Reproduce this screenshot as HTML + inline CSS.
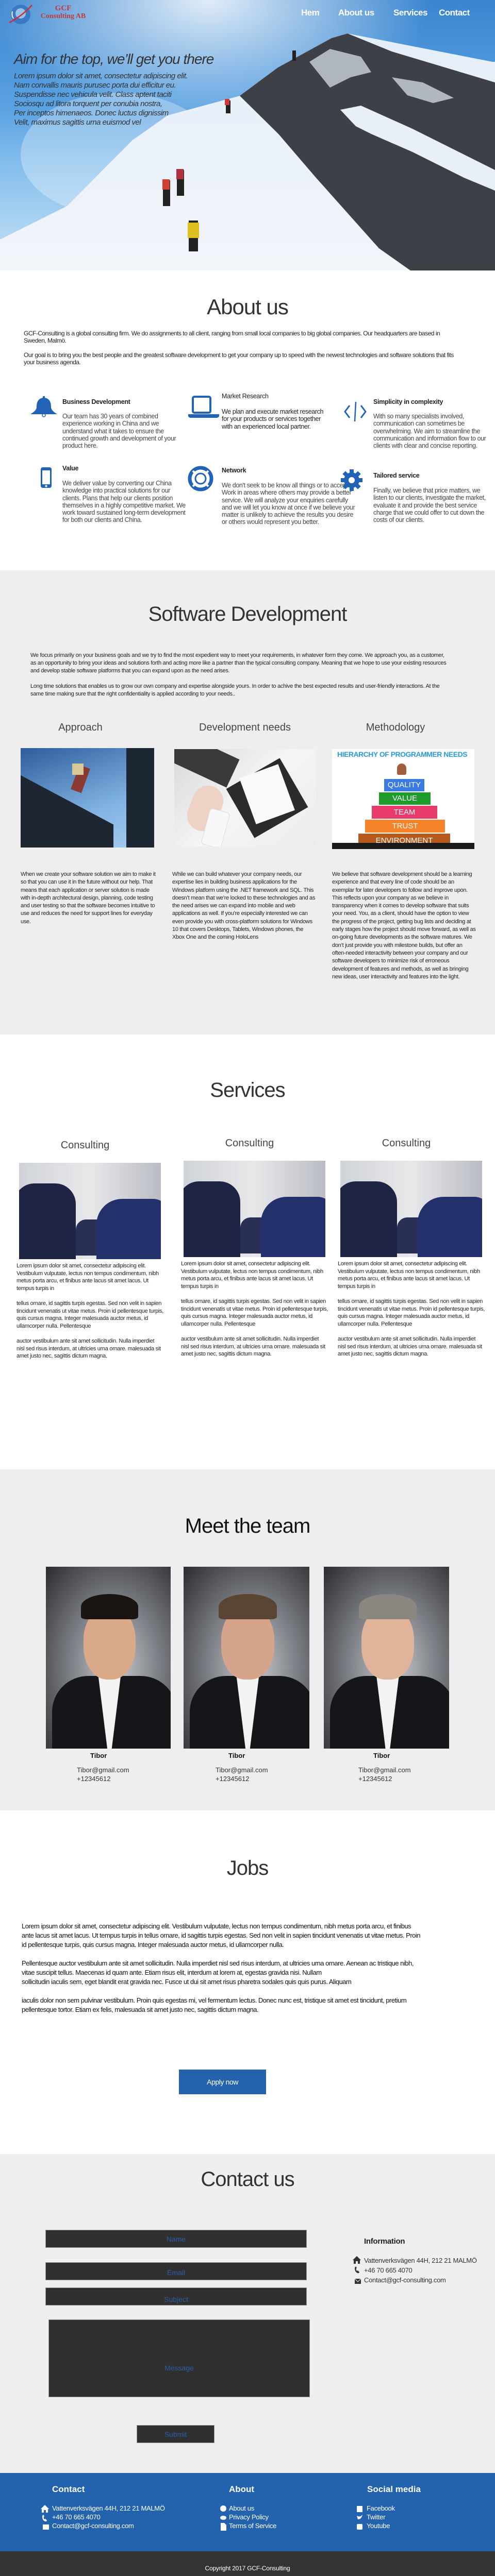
<!DOCTYPE html>
<html><head><meta charset="utf-8">
<style>
*{margin:0;padding:0;box-sizing:border-box}
html,body{width:960px;height:5009px;overflow:hidden}
body{position:relative;font-family:"Liberation Sans",sans-serif;color:#222;background:#fff}
.a{position:absolute}
.h{position:absolute;left:0;width:960px;text-align:center;font-size:40px;color:#333;font-weight:normal;letter-spacing:-1px}
.p{position:absolute;font-size:11px;line-height:14.4px;color:#222;letter-spacing:-0.3px}
.ic{position:absolute}
.t1{font-size:12.5px;font-weight:bold;color:#222;letter-spacing:-0.3px}
.t2{font-size:12.5px;line-height:14.3px;color:#444;letter-spacing:-0.4px}
.sub{position:absolute;font-size:20px;color:#444;text-align:center;width:300px}
.inp{position:absolute;background:#303030;border:1px solid #999;color:#2a5ca6;font-size:14px;text-align:center}
.ft{position:absolute;color:#fff;font-size:13px;line-height:17px}
</style></head><body>

<!-- HERO -->
<div class="a" style="left:0;top:0;width:960px;height:525px;overflow:hidden;background:linear-gradient(180deg,#3a85cf 0%,#5aa2e2 40%,#8cc3ee 65%,#c8e2f6 100%)">
<svg class="a" style="left:0;top:0" width="960" height="525">
<defs><radialGradient id="sun" cx="0.42" cy="0.0" r="0.45"><stop offset="0" stop-color="#fff" stop-opacity="0.85"/><stop offset="1" stop-color="#fff" stop-opacity="0"/></radialGradient>
<linearGradient id="snow" x1="0" y1="0" x2="0" y2="1"><stop offset="0" stop-color="#e4eef8"/><stop offset="1" stop-color="#f2f5fa"/></linearGradient></defs>
<rect width="960" height="525" fill="url(#sun)"/>
<ellipse cx="230" cy="300" rx="190" ry="120" fill="#fff" opacity="0.3"/>
<polygon points="0,525 0,465 130,400 257,272 325,224 465,186 539,131 643,74 674,65 955,120 960,120 960,525" fill="url(#snow)"/>
<polygon points="465,186 539,131 643,74 674,65 760,100 960,160 960,525 796,525 735,482 612,344 540,260" fill="#3d4047"/>
<polygon points="660,213 700,205 800,250 900,300 960,330 960,370 900,345 800,295 720,260 690,245" fill="#e9eff6"/>
<polygon points="600,120 640,95 700,110 720,140 680,150 640,170" fill="#dfe8f1" opacity="0.7"/>
<polygon points="760,150 820,160 880,190 840,200 790,185" fill="#e2e9f1" opacity="0.7"/>
<g fill="#222"><rect x="366" y="428" width="18" height="60"/><rect x="316" y="350" width="14" height="50"/><rect x="343" y="330" width="14" height="50"/><rect x="438" y="195" width="9" height="25"/><rect x="567" y="98" width="7" height="20"/></g>
<rect x="364" y="432" width="22" height="30" fill="#e0c020"/>
<rect x="315" y="348" width="14" height="20" fill="#d04030"/>
<rect x="342" y="328" width="14" height="20" fill="#b03040"/>
<rect x="436" y="192" width="9" height="12" fill="#d03a3a"/>
</svg>
<svg class="a" style="left:14px;top:6px" width="50" height="46"><circle cx="26" cy="22" r="19" fill="#3a78c8"/><circle cx="26" cy="20" r="10" fill="#bfe2f7" opacity="0.7"/><path d="M4 38 Q30 24 48 4" stroke="#d03030" stroke-width="2.5" fill="none"/><path d="M10 16 Q8 24 12 30" stroke="#fff" stroke-width="2" fill="none"/></svg>
<div class="a" style="left:75px;top:9px;width:95px;text-align:center;font-family:'Liberation Serif',serif;color:#c23a3a;font-weight:bold;font-size:15px;line-height:15px">GCF<br><span style="font-size:14px">Consulting AB</span></div>
<div class="a" style="top:15px;left:584px;color:#fff;font-size:17px;font-weight:bold;letter-spacing:-0.5px">Hem</div>
<div class="a" style="top:15px;left:656px;color:#fff;font-size:17px;font-weight:bold;letter-spacing:-0.5px">About us</div>
<div class="a" style="top:15px;left:763px;color:#fff;font-size:17px;font-weight:bold;letter-spacing:-0.5px">Services</div>
<div class="a" style="top:15px;left:851px;color:#fff;font-size:17px;font-weight:bold;letter-spacing:-0.5px">Contact</div>
<div class="a" style="top:99px;left:27px;font-size:28px;font-style:italic;color:#333;letter-spacing:-1px">Aim for the top, we’ll get you there</div>
<div class="a" style="top:139px;left:27px;font-size:15px;line-height:18px;font-style:italic;color:#333;letter-spacing:-0.5px">Lorem ipsum dolor sit amet, consectetur adipiscing elit.<br>Nam convallis mauris purusec porta dui efficitur eu.<br>Suspendisse nec vehicula velit. Class aptent taciti<br>Sociosqu ad litora torquent per conubia nostra,<br>Per inceptos himenaeos. Donec luctus dignissim<br>Velit, maximus sagittis urna euismod vel</div>
</div>

<!-- ABOUT -->
<div class="h" style="top:572px;font-size:42px">About us</div>
<div class="p" style="left:46px;top:640px;width:850px;font-size:12px;line-height:14px;letter-spacing:-0.5px">GCF-Consulting is a global consulting firm. We do assignments to all client, ranging from small local companies to big global companies. Our headquarters are based in Sweden, Malmö.<br><br>Our goal is to bring you the best people and the greatest software development to get your company up to speed with the newest technologies and software solutions that fits your business agenda.</div>

<svg class="ic" style="left:55px;top:768px" width="60" height="42"><path d="M28 1 h4 v3 C42 6 44 14 44 22 C44 28 50 32 56 36 H4 C10 32 16 28 16 22 C16 14 18 6 28 4Z" fill="#2263b5"/><circle cx="30" cy="38" r="3" fill="none" stroke="#2263b5" stroke-width="1.5"/></svg>
<div class="a t1" style="left:121px;top:773px">Business Development</div>
<div class="a t2" style="left:121px;top:801px;width:230px">Our team has 30 years of combined experience working in China and we understand what it takes to ensure the continued growth and development of your product here.</div>

<svg class="ic" style="left:365px;top:767px" width="60" height="44"><rect x="9" y="3" width="34" height="31" rx="3" fill="none" stroke="#2263b5" stroke-width="4"/><path d="M0 37 H60 V41 Q58 44 55 44 H5 Q2 44 0 41Z" fill="#2263b5"/></svg>
<div class="a t1" style="left:430px;top:762px;font-weight:normal">Market Research</div>
<div class="a t2" style="left:430px;top:792px;width:210px;color:#222">We plan and execute market research for your products or services together with an experienced local partner.</div>

<svg class="ic" style="left:666px;top:779px" width="48" height="40"><path d="M12 8 L3 20 L12 32 M34 8 L43 20 L34 32" fill="none" stroke="#2263b5" stroke-width="3"/><path d="M24 1 L22 39" stroke="#2263b5" stroke-width="2.5"/></svg>
<div class="a t1" style="left:724px;top:773px">Simplicity in complexity</div>
<div class="a t2" style="left:724px;top:801px;width:230px">With so many specialists involved, communication can sometimes be overwhelming. We aim to streamline the communication and information flow to our clients with clear and concise reporting.</div>

<svg class="ic" style="left:78px;top:906px" width="24" height="42"><rect x="1" y="1" width="21" height="40" rx="4" fill="#2263b5"/><rect x="4" y="7" width="15" height="27" fill="#fff"/><circle cx="11.5" cy="37.5" r="2" fill="#fff"/></svg>
<div class="a t1" style="left:121px;top:902px">Value</div>
<div class="a t2" style="left:121px;top:931px;width:245px">We deliver value by converting our China knowledge into practical solutions for our clients. Plans that help our clients position themselves in a highly competitive market. We work toward sustained long-term development for both our clients and China.</div>

<svg class="ic" style="left:364px;top:904px" width="50" height="50"><circle cx="25" cy="25" r="21" fill="none" stroke="#2263b5" stroke-width="7"/><circle cx="25" cy="25" r="10" fill="none" stroke="#2263b5" stroke-width="3"/><g stroke="#fff" stroke-width="4"><path d="M10 10 L16 16 M40 10 L34 16 M10 40 L16 34 M40 40 L34 34"/></g></svg>
<div class="a t1" style="left:430px;top:906px">Network</div>
<div class="a t2" style="left:430px;top:935px;width:260px">We don't seek to be know all things or to accept Work in areas where others may provide a better service. We will analyze your enquiries carefully and we will let you know at once if we believe your matter is unlikely to achieve the results you desire or others would represent you better.</div>

<svg class="ic" style="left:659px;top:910px" width="46" height="44"><g fill="#2263b5"><circle cx="23" cy="22" r="15"/><rect x="19" y="1" width="8" height="42"/><rect x="2" y="18" width="42" height="8"/><rect x="19" y="1" width="8" height="42" transform="rotate(45 23 22)"/><rect x="19" y="1" width="8" height="42" transform="rotate(-45 23 22)"/></g><circle cx="23" cy="22" r="6" fill="#fff"/></svg>
<div class="a t1" style="left:724px;top:916px">Tailored service</div>
<div class="a t2" style="left:724px;top:945px;width:230px">Finally, we believe that price matters, we listen to our clients, investigate the market, evaluate it and provide the best service charge that we could offer to cut down the costs of our clients.</div>

<!-- SOFTWARE DEV -->
<div class="a" style="left:0;top:1107px;width:960px;height:901px;background:#eeeeee"></div>
<div class="h" style="top:1170px">Software Development</div>
<div class="p" style="left:59px;top:1265px;width:815px;line-height:15px">We focus primarily on your business goals and we try to find the most expedient way to meet your requirements, in whatever form they come. We approach you, as a customer, as an opportunity to bring your ideas and solutions forth and acting more like a partner than the typical consulting company. Meaning that we hope to use your existing resources and develop stable software platforms that you can expand upon as the need arises.<br><br>Long time solutions that enables us to grow our own company and expertise alongside yours. In order to achive the best expected results and user-friendly interactions. At the same time making sure that the right confidentiality is applied according to your needs..</div>
<div class="sub" style="left:6px;top:1401px">Approach</div>
<div class="sub" style="left:325px;top:1401px">Development needs</div>
<div class="sub" style="left:617px;top:1401px">Methodology</div>

<div class="a" style="left:40px;top:1452px;width:259px;height:193px;background:linear-gradient(160deg,#2e5d9a,#7fb2e3 60%,#a9cdef);overflow:hidden">
<div class="a" style="left:205px;top:0;width:54px;height:193px;background:#1d2733"></div>
<div class="a" style="left:-40px;top:90px;width:220px;height:200px;background:#1e2631;transform:skewY(28deg)"></div>
<div class="a" style="left:105px;top:35px;width:22px;height:50px;background:#8a3a30;transform:rotate(20deg)"></div>
<div class="a" style="left:100px;top:30px;width:22px;height:22px;background:#d8c79a"></div>
</div>
<div class="a" style="left:338px;top:1454px;width:275px;height:189px;background:linear-gradient(135deg,#d8d8d8,#f5f5f5 50%,#ececec);overflow:hidden">
<div class="a" style="left:-10px;top:-10px;width:130px;height:60px;background:#3a3a3a;transform:rotate(25deg)"></div>
<div class="a" style="left:120px;top:40px;width:120px;height:110px;background:#2b2b2b;transform:rotate(-30deg)"></div>
<div class="a" style="left:140px;top:40px;width:80px;height:95px;background:#fafafa;transform:rotate(-20deg)"></div>
<div class="a" style="left:30px;top:70px;width:60px;height:90px;background:#efd2c6;border-radius:30px;transform:rotate(20deg)"></div>
<div class="a" style="left:60px;top:118px;width:40px;height:72px;background:#f8f8f8;border:1px solid #ddd;border-radius:6px;transform:rotate(15deg)"></div>
</div>
<div class="a" style="left:644px;top:1454px;width:276px;height:194px;background:#fff;overflow:hidden">
<div class="a" style="left:10px;top:2px;font-size:14px;font-weight:bold;color:#2a9bd8;letter-spacing:-0.5px">HIERARCHY OF PROGRAMMER NEEDS</div>
<div class="a" style="left:126px;top:28px;width:18px;height:22px;background:#a06040;border-radius:9px 9px 3px 3px"></div>
<div class="a" style="left:101px;top:58px;width:78px;height:24px;background:#3b7ae0;color:#fff;font-size:15px;text-align:center;line-height:24px">QUALITY</div>
<div class="a" style="left:91px;top:84px;width:100px;height:24px;background:#1e9b2c;color:#fff;font-size:15px;text-align:center;line-height:24px">VALUE</div>
<div class="a" style="left:77px;top:110px;width:127px;height:25px;background:#e83b6b;color:#fff;font-size:15px;text-align:center;line-height:25px">TEAM</div>
<div class="a" style="left:64px;top:137px;width:155px;height:25px;background:#f6822a;color:#fff;font-size:15px;text-align:center;line-height:25px">TRUST</div>
<div class="a" style="left:51px;top:164px;width:178px;height:28px;background:#b55a1c;color:#fff;font-size:15px;text-align:center;line-height:28px">ENVIRONMENT</div>
<div class="a" style="left:0;top:182px;width:276px;height:14px;background:#1a1a1a"></div>
</div>
<div class="p" style="left:40px;top:1690px;width:262px;line-height:15.3px">When we create your software solution we aim to make it so that you can use it in the future without our help. That means that each application or server solution is made with in-depth architectural design, planning, code testing and user testing so that the software becomes intuitive to use and reduces the need for support lines for everyday use.</div>
<div class="p" style="left:334px;top:1690px;width:278px;line-height:15.3px">While we can build whatever your company needs, our expertise lies in building business applications for the Windows platform using the .NET framework and SQL. This doesn’t mean that we’re locked to these technologies and as the need arises we can expand into mobile and web applications as well. If you’re especially interested we can even provide you with cross-platform solutions for Windows 10 that covers Desktops, Tablets, Windows phones, the Xbox One and the coming HoloLens</div>
<div class="p" style="left:644px;top:1690px;width:280px;line-height:15.3px">We believe that software development should be a learning experience and that every line of code should be an exemplar for later developers to follow and improve upon. This reflects upon your company as we believe in transparency when it comes to develop software that suits your need. You, as a client, should have the option to view the progress of the project, getting bug lists and deciding at early stages how the project should move forward, as well as on-going future developments as the software matures. We don’t just provide you with milestone builds, but offer an often-needed interactivity between your company and our software developers to minimize risk of erroneous development of features and methods, as well as bringing new ideas, user interactivity and features into the light.</div>

<!-- SERVICES -->
<style>
.svc{width:275px;height:187px;overflow:hidden;background:linear-gradient(90deg,#cfd3d8,#e8e8ea 50%,#b9bcc4)}
.svc::before{content:"";position:absolute;left:-10px;top:40px;width:120px;height:170px;background:#1f2444;border-radius:40px 40px 0 0}
.svc::after{content:"";position:absolute;left:150px;top:70px;width:140px;height:130px;background:#23306b;border-radius:50px 30px 0 0;box-shadow:-70px 10px 0 -30px #2a2f55}
</style>
<div class="h" style="top:2094px">Services</div>
<div class="sub" style="left:15px;top:2212px">Consulting</div>
<div class="sub" style="left:334px;top:2208px">Consulting</div>
<div class="sub" style="left:638px;top:2208px">Consulting</div>
<div class="a svc" style="left:37px;top:2257px"></div>
<div class="a svc" style="left:356px;top:2253px"></div>
<div class="a svc" style="left:660px;top:2253px"></div>
<div class="p" style="left:32px;top:2450px;width:285px;line-height:14.6px">Lorem ipsum dolor sit amet, consectetur adipiscing elit. Vestibulum vulputate, lectus non tempus condimentum, nibh metus porta arcu, et finibus ante lacus sit amet lacus. Ut tempus turpis in<br><br>tellus ornare, id sagittis turpis egestas. Sed non velit in sapien tincidunt venenatis ut vitae metus. Proin id pellentesque turpis, quis cursus magna. Integer malesuada auctor metus, id ullamcorper nulla. Pellentesque<br><br>auctor vestibulum ante sit amet sollicitudin. Nulla imperdiet nisl sed risus interdum, at ultricies urna ornare. malesuada sit amet justo nec, sagittis dictum magna.</div>
<div class="p" style="left:351px;top:2446px;width:285px;line-height:14.6px">Lorem ipsum dolor sit amet, consectetur adipiscing elit. Vestibulum vulputate, lectus non tempus condimentum, nibh metus porta arcu, et finibus ante lacus sit amet lacus. Ut tempus turpis in<br><br>tellus ornare, id sagittis turpis egestas. Sed non velit in sapien tincidunt venenatis ut vitae metus. Proin id pellentesque turpis, quis cursus magna. Integer malesuada auctor metus, id ullamcorper nulla. Pellentesque<br><br>auctor vestibulum ante sit amet sollicitudin. Nulla imperdiet nisl sed risus interdum, at ultricies urna ornare. malesuada sit amet justo nec, sagittis dictum magna.</div>
<div class="p" style="left:655px;top:2446px;width:285px;line-height:14.6px">Lorem ipsum dolor sit amet, consectetur adipiscing elit. Vestibulum vulputate, lectus non tempus condimentum, nibh metus porta arcu, et finibus ante lacus sit amet lacus. Ut tempus turpis in<br><br>tellus ornare, id sagittis turpis egestas. Sed non velit in sapien tincidunt venenatis ut vitae metus. Proin id pellentesque turpis, quis cursus magna. Integer malesuada auctor metus, id ullamcorper nulla. Pellentesque<br><br>auctor vestibulum ante sit amet sollicitudin. Nulla imperdiet nisl sed risus interdum, at ultricies urna ornare. malesuada sit amet justo nec, sagittis dictum magna.</div>

<!-- TEAM -->
<style>
.tm{position:absolute;top:3041px;height:353px;overflow:hidden;background:radial-gradient(ellipse at 55% 55%,#c9cbcf 0%,#7d8086 45%,#2b2c30 100%)}
.tm .s{position:absolute;left:5%;right:-5%;top:60%;bottom:0;background:#15161a;border-radius:70px 70px 0 0}
.tm .sh{position:absolute;left:42%;width:18%;top:60%;bottom:0;background:#f3f3f3;clip-path:polygon(0 0,100% 0,60% 100%,40% 100%)}
.tm .f{position:absolute;left:30%;width:42%;top:22%;height:40%;background:#d9a98a;border-radius:45%}
.tm .hr{position:absolute;left:28%;width:46%;top:15%;height:14%;border-radius:50% 50% 10% 10%}
</style>
<div class="a" style="left:0;top:2852px;width:960px;height:662px;background:#eeeeee"></div>
<div class="h" style="top:2940px;color:#111">Meet the team</div>
<div class="tm" style="left:89px;width:242px"><div class="s"></div><div class="sh"></div><div class="f"></div><div class="hr" style="background:#1a1512"></div></div>
<div class="tm" style="left:356px;width:244px"><div class="s"></div><div class="sh"></div><div class="f" style="background:#d6a48a"></div><div class="hr" style="background:#5a4535"></div></div>
<div class="tm" style="left:628px;width:243px"><div class="s"></div><div class="sh"></div><div class="f" style="background:#e0b499"></div><div class="hr" style="background:#8b8680"></div></div>
<div class="a" style="left:175px;top:3400px;font-size:13px;font-weight:bold;color:#111">Tibor</div>
<div class="a" style="left:443px;top:3400px;font-size:13px;font-weight:bold;color:#111">Tibor</div>
<div class="a" style="left:724px;top:3400px;font-size:13px;font-weight:bold;color:#111">Tibor</div>
<div class="a" style="left:149px;top:3427px;font-size:13px;line-height:17px;color:#333">Tibor@gmail.com<br>+12345612</div>
<div class="a" style="left:418px;top:3427px;font-size:13px;line-height:17px;color:#333">Tibor@gmail.com<br>+12345612</div>
<div class="a" style="left:695px;top:3427px;font-size:13px;line-height:17px;color:#333">Tibor@gmail.com<br>+12345612</div>

<!-- JOBS -->
<div class="h" style="top:3604px">Jobs</div>
<div class="p" style="left:42px;top:3730px;width:780px;font-size:13px;line-height:18px;color:#111;letter-spacing:-0.5px">Lorem ipsum dolor sit amet, consectetur adipiscing elit. Vestibulum vulputate, lectus non tempus condimentum, nibh metus porta arcu, et finibus<br>ante lacus sit amet lacus. Ut tempus turpis in tellus ornare, id sagittis turpis egestas. Sed non velit in sapien tincidunt venenatis ut vitae metus. Proin id pellentesque turpis, quis cursus magna. Integer malesuada auctor metus, id ullamcorper nulla.<br><br>Pellentesque auctor vestibulum ante sit amet sollicitudin. Nulla imperdiet nisl sed risus interdum, at ultricies urna ornare. Aenean ac tristique nibh, vitae suscipit tellus. Maecenas id quam ante. Etiam risus elit, interdum at lorem at, egestas gravida nisi. Nullam<br>sollicitudin iaculis sem, eget blandit erat gravida nec. Fusce ut dui sit amet risus pharetra sodales quis quis purus. Aliquam<br><br>iaculis dolor non sem pulvinar vestibulum. Proin quis egestas mi, vel fermentum lectus. Donec nunc est, tristique sit amet est tincidunt, pretium pellentesque tortor. Etiam ex felis, malesuada sit amet justo nec, sagittis dictum magna.</div>
<div class="a" style="left:347px;top:4017px;width:169px;height:48px;background:#2462ac;color:#fff;font-size:14px;line-height:48px;text-align:center;letter-spacing:-0.4px">Apply now</div>

<!-- CONTACT -->
<div class="a" style="left:0;top:4181px;width:960px;height:619px;background:#efefef"></div>
<div class="h" style="top:4208px">Contact us</div>
<div class="inp" style="left:88px;top:4328px;width:507px;height:35px;line-height:34px">Name</div>
<div class="inp" style="left:88px;top:4391px;width:507px;height:35px;line-height:38px">Email</div>
<div class="inp" style="left:88px;top:4440px;width:507px;height:35px;line-height:44px">Subject</div>
<div class="inp" style="left:94px;top:4502px;width:507px;height:151px;line-height:186px">Message</div>
<div class="inp" style="left:265px;top:4707px;width:151px;height:35px;line-height:34px">Submit</div>
<div class="a" style="left:706px;top:4342px;font-size:15px;font-weight:bold;color:#222;letter-spacing:-0.3px">Information</div>
<div class="a" style="left:706px;top:4378px;font-size:13px;line-height:19px;color:#333;letter-spacing:-0.3px">Vattenverksvägen 44H, 212 21 MALMÖ<br>+46 70 665 4070<br>Contact@gcf-consulting.com</div>
<svg class="a" style="left:683px;top:4377px" width="20" height="60" fill="#333"><path d="M1 10 L9 2 L17 10 H15 V17 H11 V12 H7 V17 H3 V10Z"/><path d="M6 23 Q4 25 6 31 Q9 36 13 35 L14 33 L11 30 L9 31 Q7 28 8 26 L9 25 L7 22Z"/><rect x="5" y="46" width="12" height="10"/><path d="M5 46 L11 52 L17 46" stroke="#efefef" fill="none"/></svg>

<!-- FOOTER -->
<div class="a" style="left:0;top:4800px;width:960px;height:152px;background:#2363ad"></div>
<div class="ft" style="left:101px;top:4823px;font-size:17px;font-weight:bold">Contact</div>
<div class="ft" style="left:444px;top:4823px;font-size:17px;font-weight:bold">About</div>
<div class="ft" style="left:712px;top:4823px;font-size:17px;font-weight:bold">Social media</div>
<div class="ft" style="left:101px;top:4860px;letter-spacing:-0.3px">Vattenverksvägen 44H, 212 21 MALMÖ<br>+46 70 665 4070<br>Contact@gcf-consulting.com</div>
<div class="ft" style="left:444px;top:4860px;letter-spacing:-0.3px">About us<br>Privacy Policy<br>Terms of Service</div>
<div class="ft" style="left:711px;top:4860px;letter-spacing:-0.3px">Facebook<br>Twitter<br>Youtube</div>
<svg class="a" style="left:78px;top:4860px" width="20" height="54" fill="#fff"><path d="M1 10 L9 2 L17 10 H15 V17 H11 V12 H7 V17 H3 V10Z"/><path d="M5 22 Q3 24 5 30 Q8 35 12 34 L13 32 L10 29 L8 30 Q6 27 7 25 L8 24 L6 21Z"/><rect x="5" y="40" width="12" height="10"/></svg>
<svg class="a" style="left:427px;top:4862px" width="14" height="52" fill="#fff"><circle cx="6" cy="7" r="6"/><ellipse cx="6" cy="25" rx="6" ry="4"/><path d="M1 35 H8 L12 39 V50 H1Z"/></svg>
<svg class="a" style="left:691px;top:4863px" width="14" height="52" fill="#fff"><rect x="1" y="1" width="11" height="12"/><path d="M1 20 Q7 24 12 18 Q10 27 3 27Z"/><rect x="1" y="36" width="11" height="11" rx="2"/></svg>
<div class="a" style="left:0;top:4952px;width:960px;height:57px;background:#333"></div>
<div class="a" style="left:0;top:4978px;width:960px;text-align:center;color:#fff;font-size:12px;letter-spacing:-0.2px">Copyright 2017 GCF-Consulting</div>
</body></html>
